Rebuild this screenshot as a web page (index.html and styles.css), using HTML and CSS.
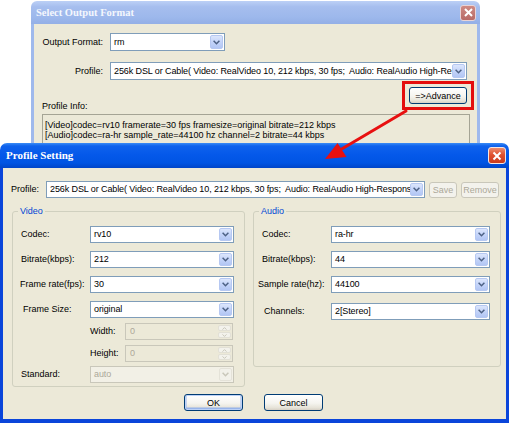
FILE: index.html
```html
<!DOCTYPE html>
<html>
<head>
<meta charset="utf-8">
<title>Profile Setting</title>
<link rel="stylesheet" href="styles.css">
</head>
<body>
<div class="desk">
  <div class="win outer">
    <div class="tbar">
      <span class="ttl">Select Output Format</span>
      <span class="xbtn xo"><svg width="9" height="9" viewBox="0 0 9 9"><path d="M1 1L8 8M8 1L1 8" stroke="#fff" stroke-width="2"/></svg></span>
    </div>
    <div class="wbody">
      <div class="frow">
        <span class="lab">Output Format:</span>
        <div class="sel w115"><span class="val">rm</span><span class="dd"><svg width="7" height="5" viewBox="0 0 7 5"><path d="M0.6 0.8L3.5 3.7L6.4 0.8" fill="none" stroke="#4D6185" stroke-width="1.5"/></svg></span></div>
      </div>
      <div class="frow r2">
        <span class="lab">Profile:</span>
        <div class="sel w357"><span class="val">256k DSL or Cable( Video: RealVideo 10, 212 kbps, 30 fps;  Audio: RealAudio High-Response</span><span class="dd"><svg width="7" height="5" viewBox="0 0 7 5"><path d="M0.6 0.8L3.5 3.7L6.4 0.8" fill="none" stroke="#4D6185" stroke-width="1.5"/></svg></span></div>
      </div>
      <div class="r3">
        <span class="pilab">Profile Info:</span>
        <span class="hl"><button class="btn adv">=&gt;Advance</button></span>
      </div>
      <div class="info">
        <div>[Video]codec=rv10 framerate=30 fps framesize=original bitrate=212 kbps</div>
        <div>[Audio]codec=ra-hr sample_rate=44100 hz channel=2 bitrate=44 kbps</div>
      </div>
    </div>
  </div>

  <div class="win inner">
    <div class="tbar">
      <span class="ttl">Profile Setting</span>
      <span class="xbtn xi"><svg width="10" height="10" viewBox="0 0 10 10"><path d="M1.5 1.5L8.5 8.5M8.5 1.5L1.5 8.5" stroke="#fff" stroke-width="2"/></svg></span>
    </div>
    <div class="wbody">
      <div class="prow">
        <span class="plab">Profile:</span>
        <div class="sel w379"><span class="val">256k DSL or Cable( Video: RealVideo 10, 212 kbps, 30 fps;  Audio: RealAudio High-Response</span><span class="dd"><svg width="7" height="5" viewBox="0 0 7 5"><path d="M0.6 0.8L3.5 3.7L6.4 0.8" fill="none" stroke="#4D6185" stroke-width="1.5"/></svg></span></div>
        <button class="btn dis save">Save</button>
        <button class="btn dis rem">Remove</button>
      </div>

      <div class="groups">
        <fieldset class="grp video">
          <legend>Video</legend>
          <div class="row">
            <span class="lab">Codec:</span>
            <div class="sel w144"><span class="val">rv10</span><span class="dd"><svg width="7" height="5" viewBox="0 0 7 5"><path d="M0.6 0.8L3.5 3.7L6.4 0.8" fill="none" stroke="#4D6185" stroke-width="1.5"/></svg></span></div>
          </div>
          <div class="row">
            <span class="lab">Bitrate(kbps):</span>
            <div class="sel w144"><span class="val">212</span><span class="dd"><svg width="7" height="5" viewBox="0 0 7 5"><path d="M0.6 0.8L3.5 3.7L6.4 0.8" fill="none" stroke="#4D6185" stroke-width="1.5"/></svg></span></div>
          </div>
          <div class="row">
            <span class="lab o1">Frame rate(fps):</span>
            <div class="sel w144"><span class="val">30</span><span class="dd"><svg width="7" height="5" viewBox="0 0 7 5"><path d="M0.6 0.8L3.5 3.7L6.4 0.8" fill="none" stroke="#4D6185" stroke-width="1.5"/></svg></span></div>
          </div>
          <div class="row short">
            <span class="lab i2">Frame Size:</span>
            <div class="sel w144"><span class="val">original</span><span class="dd"><svg width="7" height="5" viewBox="0 0 7 5"><path d="M0.6 0.8L3.5 3.7L6.4 0.8" fill="none" stroke="#4D6185" stroke-width="1.5"/></svg></span></div>
          </div>
          <div class="row sub short">
            <span class="slab">Width:</span>
            <div class="spin"><span class="val">0</span><span class="sb"><span class="sbb"><svg width="5" height="3" viewBox="0 0 5 3"><path d="M0.5 2.6L2.5 0.6L4.5 2.6" fill="none" stroke="#C9C7BA" stroke-width="1"/></svg></span><span class="sbb"><svg width="5" height="3" viewBox="0 0 5 3"><path d="M0.5 0.4L2.5 2.4L4.5 0.4" fill="none" stroke="#C9C7BA" stroke-width="1"/></svg></span></span></div>
          </div>
          <div class="row sub shorter">
            <span class="slab">Height:</span>
            <div class="spin"><span class="val">0</span><span class="sb"><span class="sbb"><svg width="5" height="3" viewBox="0 0 5 3"><path d="M0.5 2.6L2.5 0.6L4.5 2.6" fill="none" stroke="#C9C7BA" stroke-width="1"/></svg></span><span class="sbb"><svg width="5" height="3" viewBox="0 0 5 3"><path d="M0.5 0.4L2.5 2.4L4.5 0.4" fill="none" stroke="#C9C7BA" stroke-width="1"/></svg></span></span></div>
          </div>
          <div class="row last">
            <span class="lab">Standard:</span>
            <div class="sel w144 disabled"><span class="val">auto</span><span class="dd"><svg width="7" height="5" viewBox="0 0 7 5"><path d="M0.6 0.8L3.5 3.7L6.4 0.8" fill="none" stroke="#C9C7BA" stroke-width="1.5"/></svg></span></div>
          </div>
        </fieldset>

        <fieldset class="grp audio">
          <legend>Audio</legend>
          <div class="row">
            <span class="lab">Codec:</span>
            <div class="sel w159"><span class="val">ra-hr</span><span class="dd"><svg width="7" height="5" viewBox="0 0 7 5"><path d="M0.6 0.8L3.5 3.7L6.4 0.8" fill="none" stroke="#4D6185" stroke-width="1.5"/></svg></span></div>
          </div>
          <div class="row">
            <span class="lab">Bitrate(kbps):</span>
            <div class="sel w159"><span class="val">44</span><span class="dd"><svg width="7" height="5" viewBox="0 0 7 5"><path d="M0.6 0.8L3.5 3.7L6.4 0.8" fill="none" stroke="#4D6185" stroke-width="1.5"/></svg></span></div>
          </div>
          <div class="row tall">
            <span class="lab o4">Sample rate(hz):</span>
            <div class="sel w159"><span class="val">44100</span><span class="dd"><svg width="7" height="5" viewBox="0 0 7 5"><path d="M0.6 0.8L3.5 3.7L6.4 0.8" fill="none" stroke="#4D6185" stroke-width="1.5"/></svg></span></div>
          </div>
          <div class="row last">
            <span class="lab i2">Channels:</span>
            <div class="sel w159"><span class="val">2[Stereo]</span><span class="dd"><svg width="7" height="5" viewBox="0 0 7 5"><path d="M0.6 0.8L3.5 3.7L6.4 0.8" fill="none" stroke="#4D6185" stroke-width="1.5"/></svg></span></div>
          </div>
        </fieldset>
      </div>

      <div class="actions">
        <button class="btn def">OK</button>
        <button class="btn">Cancel</button>
      </div>
    </div>
  </div>

  <svg class="arrow" width="512" height="423" viewBox="0 0 512 423">
    <line x1="406" y1="111" x2="340" y2="150" stroke="#E81010" stroke-width="3" stroke-linecap="round"/>
    <polygon points="325,159 337.5,143 346.5,157" fill="#E81010"/>
  </svg>
</div>
</body>
</html>
```

FILE: styles.css
```css
* { box-sizing: border-box; margin: 0; padding: 0; }
html, body { background: #fff; }
body {
  font-family: "Liberation Sans", Arial, sans-serif;
  font-size: 9px;
  line-height: 11px;
  color: #000;
}
.desk {
  position: relative;
  width: 512px;
  height: 423px;
  overflow: hidden;
  background: #fff;
}
.win {
  position: absolute;
  display: flex;
  flex-direction: column;
}
.tbar {
  display: flex;
  align-items: center;
  justify-content: space-between;
  flex: none;
}
.ttl {
  font-family: "Liberation Serif", "Times New Roman", serif;
  font-weight: bold;
  font-size: 10.5px;
  white-space: nowrap;
}
.xbtn {
  display: flex;
  align-items: center;
  justify-content: center;
  border-radius: 3px;
}

/* ---------- outer (inactive) window ---------- */
.outer {
  left: 31px;
  top: 1px;
  width: 449px;
  height: 460px;
}
.outer .tbar {
  height: 23px;
  padding: 0 4px 0 5px;
  border-radius: 6px 6px 0 0;
  background: linear-gradient(#BCD0F6, #A6BEEE 25%, #9DB8EC 70%, #93AFE6);
}
.outer .ttl { color: #F4F7FD; }
.xo {
  width: 16px;
  height: 16px;
  background: linear-gradient(#CE8A84, #B86A66);
  border: 1px solid #E9D4D6;
}
.outer .wbody {
  flex: 1;
  background: #ECE9D8;
  border: 3px solid #9FB9EC;
  border-top: 0;
  padding: 9px 10px 0 8px;
}
.frow {
  display: flex;
  align-items: center;
  height: 18px;
}
.frow .lab {
  width: 61px;
  text-align: right;
  margin-right: 7px;
  white-space: nowrap;
}
.r2 { margin-top: 11px; }
.r3 {
  margin-top: 7px;
  height: 25px;
  display: flex;
  justify-content: space-between;
  align-items: flex-end;
}
.pilab { line-height: 11px; }
.hl {
  align-self: flex-start;
  display: block;
  border: 3px solid #E40E0E;
  padding: 3px 4px;
  margin: -6px -7px 0 0;
}
.adv {
  width: 58px;
  height: 17px;
}
.info {
  margin-top: 2px;
  margin-right: -3px;
  height: 60px;
  border: 1px solid #A5A495;
  background: #ECE9D8;
  padding: 6px 2px 0;
  line-height: 9.5px;
  white-space: nowrap;
}

/* ---------- selects ---------- */
.sel {
  display: flex;
  align-items: stretch;
  height: 100%;
  background: #fff;
  border: 1px solid #7F9DB9;
  padding: 1px;
}
.frow .sel { height: 18px; }
.sel .val {
  flex: 1;
  overflow: hidden;
  white-space: pre;
  padding-left: 2px;
  letter-spacing: -0.1px;
  display: flex;
  align-items: center;
}
.sel .dd {
  width: 13px;
  flex: none;
  display: flex;
  align-items: center;
  justify-content: center;
  border: 1px solid #B6C8F2;
  border-radius: 2px;
  background: linear-gradient(#DCE6FC, #C4D4F9 50%, #B2C6F4);
}
.sel.disabled {
  background: #F2F0E6;
  border-color: #C9C7BA;
  color: #ACA899;
}
.sel.disabled .dd {
  border-color: #E4E2D8;
  background: #F2F1EA;
}
.w115 { width: 115px; }
.w357 { width: 357px; }
.w379 { width: 379px; }
.w144 { width: 144px; }
.w159 { width: 159px; }

/* ---------- buttons ---------- */
.btn {
  font-family: "Liberation Sans", Arial, sans-serif;
  font-size: 9px;
  color: #000;
  border: 1px solid #003C74;
  border-radius: 3px;
  background: linear-gradient(#FFFFFF, #F5F4EF 55%, #E6E3D8 85%, #D6D0C5);
  display: flex;
  align-items: center;
  justify-content: center;
}
.btn.dis {
  color: #ACA899;
  border-color: #C9C7BA;
  background: #F3F2EC;
}
.btn.def {
  box-shadow: inset 0 0 0 1px #BCD1F6, inset 0 -1px 0 1.5px #98B4EA;
}

/* ---------- inner (active) window ---------- */
.inner {
  left: 0;
  top: 143px;
  width: 509px;
  height: 280px;
}
.inner .tbar {
  height: 25px;
  padding: 0 3px 0 6px;
  border-radius: 7px 7px 0 0;
  background: linear-gradient(#3A8CF6, #0F62EC 12%, #0559EA 45%, #0054E3 80%, #0045C8);
}
.inner .ttl { color: #fff; font-size: 11px; }
.xi {
  width: 18px;
  height: 17px;
  background: linear-gradient(#EC8C6E, #E0512F 45%, #C93B1D);
  border: 1px solid #F4E6E2;
}
.inner .wbody {
  flex: 1;
  background: #ECE9D8;
  border: solid #0A45DA;
  border-width: 0 3px 4px 3px;
  padding: 13px 0 0 8px;
}
.prow {
  display: flex;
  align-items: center;
  height: 17px;
}
.plab { width: 35px; }
.save { width: 28px; height: 16px; margin-left: 4px; }
.rem { width: 38px; height: 16px; margin-left: 4px; }

.groups {
  display: flex;
  align-items: flex-start;
  gap: 8px;
  margin-top: 8px;
  margin-left: 1px;
}
.grp {
  border: 1px solid #D0D0BF;
  border-radius: 3px;
  padding: 10px 10px 3px 8px;
}
.grp legend {
  color: #0046D5;
  margin-left: -3px;
  padding: 0 2px;
  line-height: 10px;
}
.video { width: 233px; }
.audio { width: 248px; padding-bottom: 46px; }

.row {
  display: flex;
  align-items: center;
  height: 17px;
  margin-bottom: 8px;
}
.row.short { margin-bottom: 5px; }
.row.shorter { margin-bottom: 4px; }
.row.tall { margin-bottom: 10px; }
.row.last { margin-bottom: 0; }
.row .lab {
  width: 69px;
  flex: none;
  white-space: nowrap;
}
.lab.i2 { padding-left: 2px; }
.lab.o1 { margin-left: -1px; margin-right: 1px; }
.lab.o4 { margin-left: -4px; margin-right: 4px; }
.row.sub { padding-left: 69px; }
.slab { width: 35px; flex: none; }
.spin {
  width: 108px;
  height: 17px;
  display: flex;
  border: 1px solid #C9C7BA;
  background: #ECE9D8;
  padding: 1px;
  color: #ACA899;
}
.spin .val {
  flex: 1;
  padding-left: 3px;
  display: flex;
  align-items: center;
}
.sb {
  width: 13px;
  display: flex;
  flex-direction: column;
  gap: 1px;
}
.sbb {
  flex: 1;
  display: flex;
  align-items: center;
  justify-content: center;
  border: 1px solid #E2E0D6;
  border-radius: 2px;
  background: #F3F2EC;
}

.actions {
  display: flex;
  justify-content: center;
  gap: 21px;
  margin-top: 7px;
  padding-right: 10px;
}
.actions .btn { width: 59px; height: 17px; }

.arrow {
  position: absolute;
  left: 0;
  top: 0;
  pointer-events: none;
}
```
